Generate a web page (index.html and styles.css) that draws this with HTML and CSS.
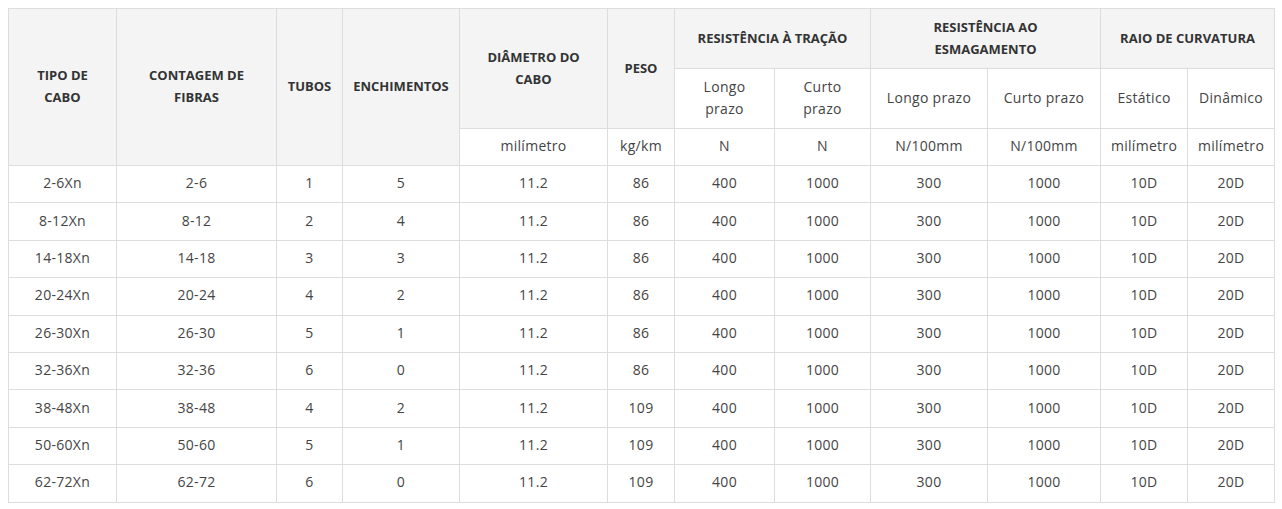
FILE: index.html
```html
<!DOCTYPE html>
<html lang="pt">
<head>
<meta charset="utf-8">
<title>Tabela</title>
<link rel="stylesheet" href="styles.css">
</head>
<body>
<table class="spec">
  <colgroup>
    <col style="width:108px"><col style="width:160px"><col style="width:66px"><col style="width:117px">
    <col style="width:148px"><col style="width:67px"><col style="width:100px"><col style="width:96px">
    <col style="width:117px"><col style="width:113px"><col style="width:87px"><col style="width:87px">
  </colgroup>
  <thead>
    <tr class="h1">
      <th rowspan="3">TIPO DE<br>CABO</th>
      <th rowspan="3">CONTAGEM DE<br>FIBRAS</th>
      <th rowspan="3">TUBOS</th>
      <th rowspan="3">ENCHIMENTOS</th>
      <th rowspan="2">DIÂMETRO DO<br>CABO</th>
      <th rowspan="2">PESO</th>
      <th colspan="2">RESISTÊNCIA À TRAÇÃO</th>
      <th colspan="2">RESISTÊNCIA AO<br>ESMAGAMENTO</th>
      <th colspan="2">RAIO DE CURVATURA</th>
    </tr>
    <tr class="h2">
      <td>Longo<br>prazo</td><td>Curto<br>prazo</td>
      <td>Longo prazo</td><td>Curto prazo</td>
      <td>Estático</td><td>Dinâmico</td>
    </tr>
    <tr class="h3">
      <td>milímetro</td><td>kg/km</td><td>N</td><td>N</td>
      <td>N/100mm</td><td>N/100mm</td><td>milímetro</td><td>milímetro</td>
    </tr>
  </thead>
  <tbody>
    <tr><td>2-6Xn</td><td>2-6</td><td>1</td><td>5</td><td>11.2</td><td>86</td><td>400</td><td>1000</td><td>300</td><td>1000</td><td>10D</td><td>20D</td></tr>
    <tr><td>8-12Xn</td><td>8-12</td><td>2</td><td>4</td><td>11.2</td><td>86</td><td>400</td><td>1000</td><td>300</td><td>1000</td><td>10D</td><td>20D</td></tr>
    <tr><td>14-18Xn</td><td>14-18</td><td>3</td><td>3</td><td>11.2</td><td>86</td><td>400</td><td>1000</td><td>300</td><td>1000</td><td>10D</td><td>20D</td></tr>
    <tr><td>20-24Xn</td><td>20-24</td><td>4</td><td>2</td><td>11.2</td><td>86</td><td>400</td><td>1000</td><td>300</td><td>1000</td><td>10D</td><td>20D</td></tr>
    <tr><td>26-30Xn</td><td>26-30</td><td>5</td><td>1</td><td>11.2</td><td>86</td><td>400</td><td>1000</td><td>300</td><td>1000</td><td>10D</td><td>20D</td></tr>
    <tr><td>32-36Xn</td><td>32-36</td><td>6</td><td>0</td><td>11.2</td><td>86</td><td>400</td><td>1000</td><td>300</td><td>1000</td><td>10D</td><td>20D</td></tr>
    <tr><td>38-48Xn</td><td>38-48</td><td>4</td><td>2</td><td>11.2</td><td>109</td><td>400</td><td>1000</td><td>300</td><td>1000</td><td>10D</td><td>20D</td></tr>
    <tr><td>50-60Xn</td><td>50-60</td><td>5</td><td>1</td><td>11.2</td><td>109</td><td>400</td><td>1000</td><td>300</td><td>1000</td><td>10D</td><td>20D</td></tr>
    <tr><td>62-72Xn</td><td>62-72</td><td>6</td><td>0</td><td>11.2</td><td>109</td><td>400</td><td>1000</td><td>300</td><td>1000</td><td>10D</td><td>20D</td></tr>
  </tbody>
</table>
</body>
</html>
```
FILE: styles.css
```css
html, body {
  margin: 0;
  background: #fff;
}
body {
  padding: 8px;
  font-family: "Open Sans", "Noto Sans", sans-serif;
  color: #444;
}
.spec {
  border-collapse: collapse;
  table-layout: fixed;
  width: 1266px;
}
.spec th, .spec td {
  border: 1px solid #ddd;
  text-align: center;
  vertical-align: middle;
  padding: 0 4px 2px;
  font-size: 14px;
  line-height: 22px;
  letter-spacing: 0.3px;
}
.spec th {
  background: #f4f4f4;
  color: #333;
  font-weight: 700;
  font-size: 13px;
  letter-spacing: 0;
}
.spec .h1 { height: 60px; }
.spec .h2 { height: 60px; }
.spec .h3 { height: 37px; }
.spec tbody tr { height: 37.4px; }
```
